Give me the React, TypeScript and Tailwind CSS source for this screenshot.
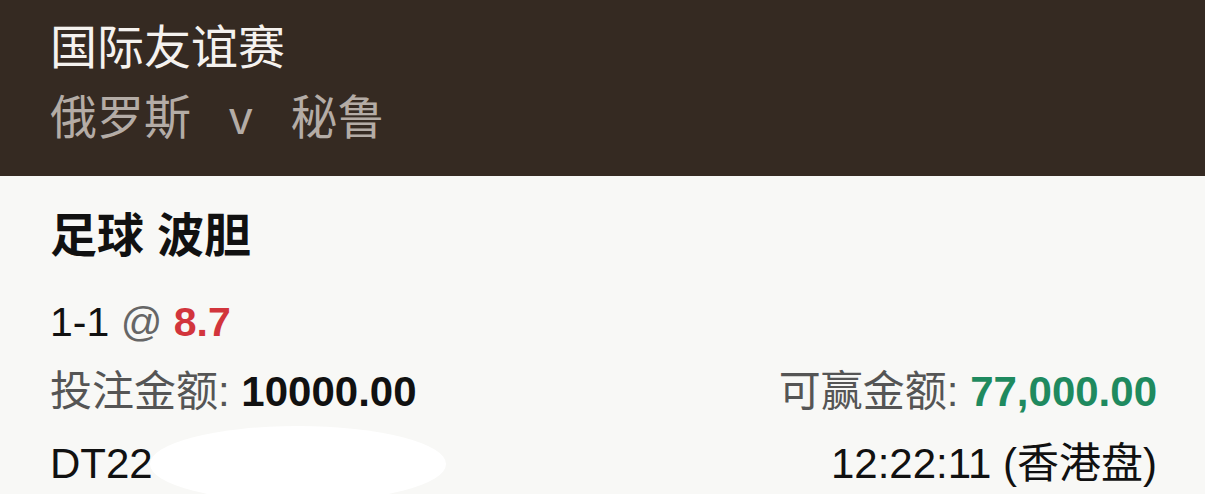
const font = { fontFamily: '"Liberation Sans", "Noto Sans CJK SC", sans-serif' };

const App = () => {
  return (
    <div className="w-[1205px] h-[494px] overflow-hidden bg-[#f8f8f6]" style={font}>
      {/* Header */}
      <div className="h-[176px] bg-[#352a22] px-[50px] pt-[20px]">
        <div className="text-[47px] leading-[56px] text-[#f5f2ef]">国际友谊赛</div>
        <div className="mt-[14px] text-[47px] leading-[56px] text-[#b4aca6] flex">
          <span>俄罗斯</span>
          <span className="ml-[38px]">v</span>
          <span className="ml-[38px]">秘鲁</span>
        </div>
      </div>

      {/* Bet details */}
      <div className="pl-[50px] pr-[48px] pt-[34px]">
        <div className="text-[47px] leading-[52px] font-bold text-[#111]">足球 波胆</div>
        <div className="mt-[36px] text-[41px] leading-[48px] text-[#111]">
          1-1 <span className="text-[#666]">@</span>{" "}
          <span className="font-bold text-[#d2353c]">8.7</span>
        </div>
        <div className="mt-[22px] flex justify-between text-[42px] leading-[48px]">
          <div>
            <span className="text-[#555]">投注金额: </span>
            <span className="font-bold text-[#111]">10000.00</span>
          </div>
          <div>
            <span className="text-[#555]">可赢金额: </span>
            <span className="font-bold text-[#1f8a5f]">77,000.00</span>
          </div>
        </div>
        <div className="mt-[24px] flex justify-between text-[42px] leading-[48px] text-[#111]">
          <div className="relative">
            DT22
            <div className="absolute left-[100px] top-[-14px] w-[296px] h-[76px] rounded-[50%] bg-white" />
          </div>
          <div>12:22:11 (香港盘)</div>
        </div>
      </div>
    </div>
  );
};

export default App;
